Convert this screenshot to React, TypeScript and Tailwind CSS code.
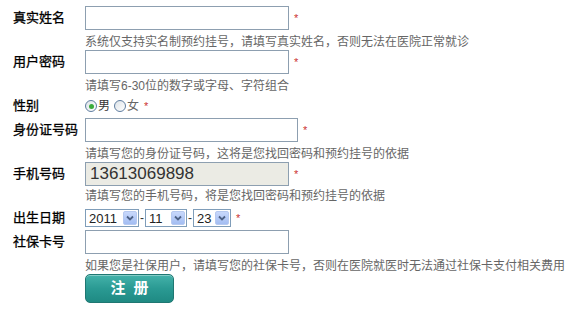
import React from 'react';

const font = "font-['Liberation_Sans','Noto_Sans_CJK_SC',sans-serif]";

function Star() {
  return <span className="ml-[5px] text-[11px] leading-none text-[#cc3333]">*</span>;
}

function Hint({ children }: { children: React.ReactNode }) {
  return <div className="pt-[4px] text-[12px] leading-[16px] text-[#666] whitespace-nowrap">{children}</div>;
}

function Label({ children, h = 24 }: { children: React.ReactNode; h?: number }) {
  return (
    <div
      className={`w-[72px] shrink-0 text-[13px] font-normal text-black [-webkit-text-stroke:0.3px_#000] ${h === 18 ? 'leading-[18px]' : 'leading-[24px]'}`}
    >
      {children}
    </div>
  );
}

function TextBox({ width = 'w-[204px]', value, gray }: { width?: string; value?: string; gray?: boolean }) {
  return (
    <div
      className={`${width} h-[24px] border border-[#8d9fb0] ${gray ? 'bg-[#ebebe4]' : 'bg-white'} flex items-center pl-[4px] text-[17px] text-[#333]`}
    >
      {value}
    </div>
  );
}

function Select({ value, width }: { value: string; width: string }) {
  return (
    <div className={`${width} h-[18px] border border-[#7f9db9] bg-white flex items-center justify-between pl-[3px] pr-[1px]`}>
      <span className="text-[13px] leading-none text-[#222]">{value}</span>
      <span className="w-[14px] h-[14px] rounded-[2px] bg-gradient-to-b from-[#c8d8fb] to-[#a3bdf2] border border-[#b6c9f0] flex items-center justify-center">
        <svg width="8" height="6" viewBox="0 0 8 6">
          <path d="M1 1.5 L4 4.5 L7 1.5" fill="none" stroke="#4d6185" strokeWidth="1.8" />
        </svg>
      </span>
    </div>
  );
}

function Radio({ checked }: { checked?: boolean }) {
  return (
    <span className="w-[12px] h-[12px] rounded-full border border-[#5f7da0] bg-gradient-to-br from-[#dde3e8] to-white flex items-center justify-center">
      {checked && <span className="w-[5px] h-[5px] rounded-full bg-[#3bab3b]" />}
    </span>
  );
}

export default function App() {
  return (
    <div className={`w-[581px] h-[318px] bg-white pt-[6px] pl-[13px] ${font}`}>
      {/* 真实姓名 */}
      <div className="flex">
        <Label>真实姓名</Label>
        <div>
          <div className="flex items-center">
            <TextBox />
            <Star />
          </div>
          <Hint>系统仅支持实名制预约挂号，请填写真实姓名，否则无法在医院正常就诊</Hint>
        </div>
      </div>

      {/* 用户密码 */}
      <div className="flex">
        <Label>用户密码</Label>
        <div>
          <div className="flex items-center">
            <TextBox />
            <Star />
          </div>
          <Hint>请填写6-30位的数字或字母、字符组合</Hint>
        </div>
      </div>

      {/* 性别 */}
      <div className="flex h-[24px] items-center">
        <Label>性别</Label>
        <div className="flex items-center text-[12px] text-[#333]">
          <Radio checked />
          <span className="ml-[1px]">男</span>
          <span className="ml-[4px]"><Radio /></span>
          <span className="ml-[1px] text-[#666]">女</span>
          <Star />
        </div>
      </div>

      {/* 身份证号码 */}
      <div className="flex">
        <Label>身份证号码</Label>
        <div>
          <div className="flex items-center">
            <TextBox width="w-[213px]" />
            <Star />
          </div>
          <Hint>请填写您的身份证号码，这将是您找回密码和预约挂号的依据</Hint>
        </div>
      </div>

      {/* 手机号码 */}
      <div className="flex">
        <Label>手机号码</Label>
        <div>
          <div className="flex items-center">
            <TextBox value="13613069898" gray />
            <Star />
          </div>
          <div className="text-[12px] leading-[16px] pt-[2px] pb-[2px] text-[#666] whitespace-nowrap">
            请填写您的手机号码，将是您找回密码和预约挂号的依据
          </div>
        </div>
      </div>

      {/* 出生日期 */}
      <div className="flex h-[24px] items-center">
        <Label h={18}>出生日期</Label>
        <div className="flex items-center text-[12px] text-[#333]">
          <Select value="2011" width="w-[54px]" />
          <span className="mx-[1px]">-</span>
          <Select value="11" width="w-[42px]" />
          <span className="mx-[1px]">-</span>
          <Select value="23" width="w-[38px]" />
          <Star />
        </div>
      </div>

      {/* 社保卡号 */}
      <div className="flex">
        <Label>社保卡号</Label>
        <div>
          <TextBox />
          <Hint>如果您是社保用户，请填写您的社保卡号，否则在医院就医时无法通过社保卡支付相关费用</Hint>
          <button className="mt-[0px] w-[89px] h-[29px] rounded-[5px] border border-[#1f7772] bg-gradient-to-b from-[#43b2aa] via-[#2a9a93] to-[#1f8a83] text-white text-[15px] font-bold tracking-[8px] pl-[8px] shadow-[inset_0_1px_0_rgba(255,255,255,0.35)]">
            注册
          </button>
        </div>
      </div>
    </div>
  );
}
